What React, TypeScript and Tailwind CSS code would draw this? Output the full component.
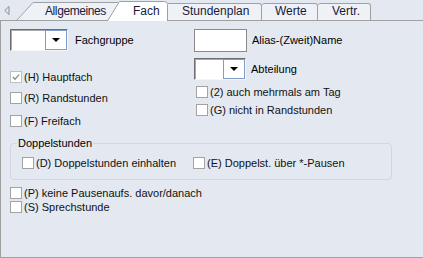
import React from "react";

function Cb({ label, checked }: { label: string; checked?: boolean }) {
  return (
    <div className="flex items-center h-[14px]">
      <span
        className={
          checked
            ? "w-[12px] h-[12px] border border-[#c0c0c0] bg-white flex items-center justify-center shrink-0"
            : "w-[12px] h-[12px] border border-[#a3a3a3] bg-white flex items-center justify-center shrink-0"
        }
      >
        {checked && (
          <svg width="8" height="8" viewBox="0 0 8 8">
            <path d="M0.8 4 L3 6.2 L7.2 1.6" fill="none" stroke="#8c8c8c" strokeWidth="1.3" />
          </svg>
        )}
      </span>
      <span className="ml-[2px] leading-[14px] text-[#111] whitespace-nowrap">{label}</span>
    </div>
  );
}

function Combo({ wide }: { wide?: boolean }) {
  return (
    <div
      className={
        (wide ? "w-[58px]" : "w-[52px]") +
        " h-[22px] flex bg-white border-t border-l border-t-[#6e6e6e] border-l-[#6e6e6e] border-r border-b border-r-[#f6f6f6] border-b-[#f6f6f6] shadow-[inset_1px_1px_0_#a9a9a9]"
      }
    >
      <div className="ml-auto w-[22px] h-full border border-[#7f9dc6] bg-white flex items-center justify-center">
        <svg width="8" height="4" viewBox="0 0 8 4">
          <path d="M0 0 H8 L4 4 Z" fill="#000" />
        </svg>
      </div>
    </div>
  );
}

export default function App() {
  return (
    <div className="w-[423px] h-[258px] bg-[#e4e9f1] font-['Liberation_Sans',Arial,sans-serif] text-[11px] text-black flex flex-col">
      {/* tab strip */}
      <div className="flex h-[21px] items-end text-[12px] text-[#1a1a3a]">
        <div className="w-[16px] h-full border-b border-[#a0a0a0] pt-[6px] pl-[4px]">
          <svg width="6" height="9" viewBox="0 0 6 9">
            <path d="M5 0.5 L0.8 4.5 L5 8.5 Z" fill="none" stroke="#8c8c8c" />
          </svg>
        </div>
        <div className="relative w-[102px] h-[19px]">
          <svg className="absolute inset-0" width="102" height="19" viewBox="0 0 102 19">
            <path d="M0 18.5 L17 0.5 H102 V18.5 Z" fill="#eef1f6" />
            <path d="M0.5 18.5 L17 0.5 H102 M0 18.5 H102" fill="none" stroke="#a0a0a0" />
          </svg>
          <div className="relative pl-[29px] pt-[2px] leading-[14px] whitespace-nowrap tracking-[-0.4px]">Allgemeines</div>
        </div>
        <div className="relative z-10 ml-[-11px] w-[61px] h-[20px]">
          <svg className="absolute inset-0" width="61" height="20" viewBox="0 0 61 20">
            <path d="M0.5 20 L12.5 0.5 H57.5 Q60.5 0.5 60.5 3.5 V20 Z" fill="#ffffff" />
            <path d="M0.5 20 L12.5 0.5 H57.5 Q60.5 0.5 60.5 3.5 V20" fill="none" stroke="#a0a0a0" />
          </svg>
          <div className="relative pl-[26px] pt-[3px] leading-[14px]">Fach</div>
        </div>
        <div className="w-[94px] h-[18px] bg-[#eef1f6] border-t border-r border-b border-[#a0a0a0] rounded-tr-[3px] pl-[14px] leading-[14px] whitespace-nowrap">
          Stundenplan
        </div>
        <div className="w-[56px] h-[18px] bg-[#eef1f6] border-t border-r border-b border-[#a0a0a0] rounded-t-[3px] pl-[13px] leading-[14px]">
          Werte
        </div>
        <div className="w-[53px] h-[18px] bg-[#eef1f6] border-t border-r border-b border-[#a0a0a0] rounded-t-[3px] pl-[14px] leading-[14px]">
          Vertr.
        </div>
        <div className="flex-1 h-full border-b border-[#a0a0a0]" />
      </div>

      {/* body */}
      <div className="flex-1 border-l border-b border-[#a0a0a0] pl-[9px] pt-[8px] flex flex-col">
        <div className="flex">
          <div className="w-[184px] flex flex-col">
            <div className="flex items-center h-[22px]">
              <Combo wide />
              <span className="ml-[7px]">Fachgruppe</span>
            </div>
            <div className="mt-[19px]">
              <Cb checked label="(H) Hauptfach" />
            </div>
            <div className="mt-[7px]">
              <Cb label="(R) Randstunden" />
            </div>
            <div className="mt-[9px]">
              <Cb label="(F) Freifach" />
            </div>
          </div>
          <div className="flex flex-col">
            <div className="flex items-center h-[23px]">
              <div className="w-[53px] h-[23px] border border-[#8a8a8a] bg-white" />
              <span className="ml-[5px]">Alias-(Zweit)Name</span>
            </div>
            <div className="mt-[6px] flex items-center h-[22px]">
              <Combo />
              <span className="ml-[5px]">Abteilung</span>
            </div>
            <div className="mt-[5px] ml-[2px]">
              <Cb label="(2) auch mehrmals am Tag" />
            </div>
            <div className="mt-[4px] ml-[2px]">
              <Cb label="(G) nicht in Randstunden" />
            </div>
          </div>
        </div>

        <div className="relative mt-[15px] w-[382px] h-[37px] border border-[#d2d7de] rounded-[4px] pt-[12px] pl-[11px] flex">
          <span className="absolute left-[6px] top-[-8px] px-[1px] bg-[#e4e9f1] leading-[14px]">Doppelstunden</span>
          <div className="w-[171px]">
            <Cb label="(D) Doppelstunden einhalten" />
          </div>
          <Cb label="(E) Doppelst. über *-Pausen" />
        </div>

        <div className="mt-[6px]">
          <Cb label="(P) keine Pausenaufs. davor/danach" />
        </div>
        <Cb label="(S) Sprechstunde" />
      </div>
    </div>
  );
}
